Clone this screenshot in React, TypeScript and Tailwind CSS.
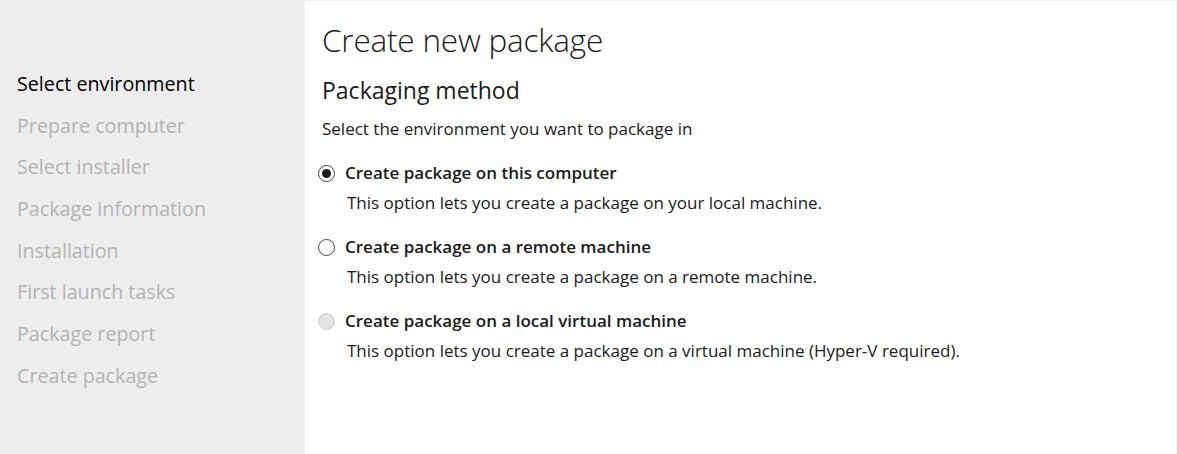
const steps = [
  "Select environment",
  "Prepare computer",
  "Select installer",
  "Package information",
  "Installation",
  "First launch tasks",
  "Package report",
  "Create package",
];

type Option = { title: string; desc: string; state: "checked" | "idle" | "disabled" };

const options: Option[] = [
  {
    title: "Create package on this computer",
    desc: "This option lets you create a package on your local machine.",
    state: "checked",
  },
  {
    title: "Create package on a remote machine",
    desc: "This option lets you create a package on a remote machine.",
    state: "idle",
  },
  {
    title: "Create package on a local virtual machine",
    desc: "This option lets you create a package on a virtual machine (Hyper-V required).",
    state: "disabled",
  },
];

function Radio({ state }: { state: Option["state"] }) {
  if (state === "disabled") {
    return <span className="block w-[17px] h-[17px] rounded-full border border-[#cfcfcf] bg-[#e3e3e3]" />;
  }
  return (
    <span className="flex items-center justify-center w-[17px] h-[17px] rounded-full border border-[#444] bg-white">
      {state === "checked" && <span className="block w-[9px] h-[9px] rounded-full bg-[#1a1a1a]" />}
    </span>
  );
}

export default function App() {
  return (
    <div className="flex w-[1177px] h-[454px] bg-white font-['Open_Sans',sans-serif] text-[#1a1a1a]">
      <nav className="w-[305px] shrink-0 bg-[#ededed] pt-[69px] pl-[17px]">
        <ul className="flex flex-col">
          {steps.map((s, i) => (
            <li
              key={s}
              className={`h-[41.7px] text-[19.7px] leading-[30px] ${i === 0 ? "text-black" : "text-[#b3b3b3]"}`}
            >
              {s}
            </li>
          ))}
        </ul>
      </nav>

      <main className="flex-1 border-t border-r border-[#f0f0f0] pl-[17px] pt-[17px]">
        <h1 className="text-[31.5px] leading-[44px] font-light tracking-[-0.2px]">Create new package</h1>
        <h2 className="mt-[13px] text-[23px] leading-[30px]">Packaging method</h2>
        <p className="mt-[12px] text-[17px] leading-[24px]">Select the environment you want to package in</p>

        <div className="mt-[20px] flex flex-col gap-[20px]">
          {options.map((o) => (
            <div key={o.title}>
              <div className="flex items-center gap-[10px] h-[24px]">
                <span className="w-[17px] flex justify-center -ml-[4px]">
                  <Radio state={o.state} />
                </span>
                <span className="text-[17px] font-semibold">{o.title}</span>
              </div>
              <div className="pl-[25px] mt-[6px] text-[17px] leading-[24px]">{o.desc}</div>
            </div>
          ))}
        </div>
      </main>
    </div>
  );
}
